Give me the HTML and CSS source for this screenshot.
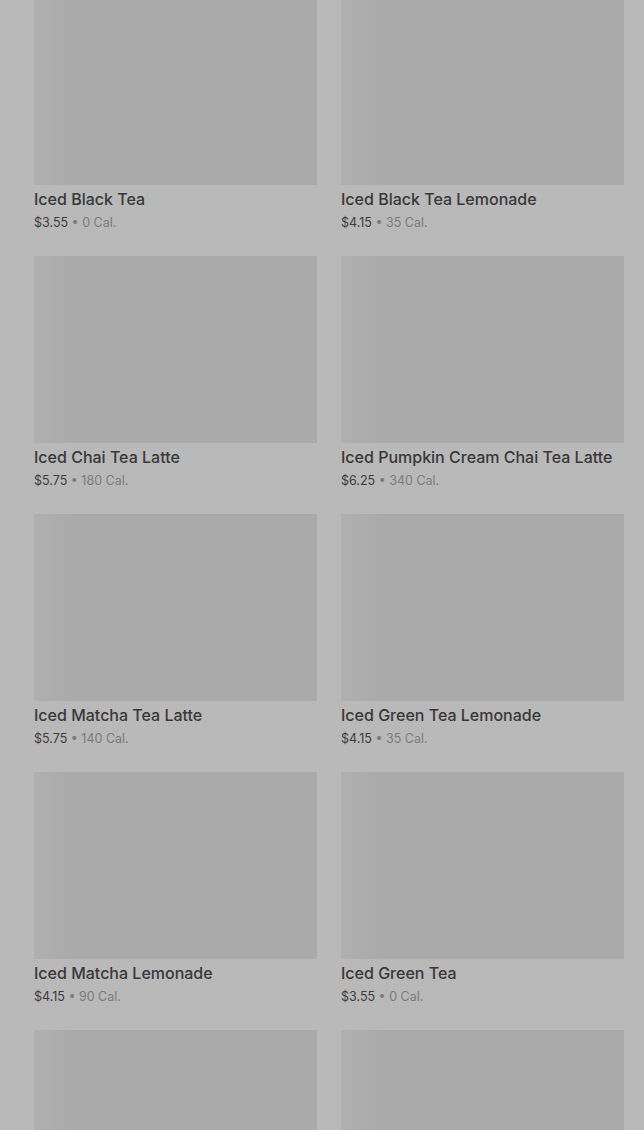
FILE: index.html
```html
<!DOCTYPE html>
<html lang="en">
<head>
  <meta charset="UTF-8" />
  <meta name="viewport" content="width=device-width, initial-scale=1.0" />
  <title>Iced Tea</title>
  <link rel="stylesheet" href="styles.css">
</head>
<body>
  <div class="menu-grid">
    <div class="product">
      <div class="product-img"></div>
      <div class="product-name">Iced Black Tea</div>
      <div class="product-info"><span class="price">$3.55</span> • 0 Cal.</div>
    </div>
    <div class="product">
      <div class="product-img"></div>
      <div class="product-name">Iced Black Tea Lemonade</div>
      <div class="product-info"><span class="price">$4.15</span> • 35 Cal.</div>
    </div>
    <div class="product">
      <div class="product-img"></div>
      <div class="product-name">Iced Chai Tea Latte</div>
      <div class="product-info"><span class="price">$5.75</span> • 180 Cal.</div>
    </div>
    <div class="product">
      <div class="product-img"></div>
      <div class="product-name">Iced Pumpkin Cream Chai Tea Latte</div>
      <div class="product-info"><span class="price">$6.25</span> • 340 Cal.</div>
    </div>
    <div class="product">
      <div class="product-img"></div>
      <div class="product-name">Iced Matcha Tea Latte</div>
      <div class="product-info"><span class="price">$5.75</span> • 140 Cal.</div>
    </div>
    <div class="product">
      <div class="product-img"></div>
      <div class="product-name">Iced Green Tea Lemonade</div>
      <div class="product-info"><span class="price">$4.15</span> • 35 Cal.</div>
    </div>
    <div class="product">
      <div class="product-img"></div>
      <div class="product-name">Iced Matcha Lemonade</div>
      <div class="product-info"><span class="price">$4.15</span> • 90 Cal.</div>
    </div>
    <div class="product">
      <div class="product-img"></div>
      <div class="product-name">Iced Green Tea</div>
      <div class="product-info"><span class="price">$3.55</span> • 0 Cal.</div>
    </div>
    <div class="product">
      <div class="product-img"></div>
    </div>
    <div class="product">
      <div class="product-img"></div>
    </div>
  </div>
</body>
</html>
```

FILE: styles.css
```css
body {
  font-family: Inter, "Noto Sans", sans-serif;
  background: #b9b9b9;
  margin: 0;
  padding: 0;
  height: 100vh;
  overflow: hidden;
}
.menu-grid {
  display: grid;
  grid-template-columns: 283px 283px;
  column-gap: 24px;
  row-gap: 24px;
  margin: -2px 20px 0 34px;
}
.product-img {
  height: 187px;
  background: linear-gradient(90deg, #b0b0b0 0, #aaaaaa 40px, #aaaaaa 100%);
}
.product-name {
  margin-top: 4px;
  font-size: 16px;
  line-height: 20px;
  font-weight: 500;
  color: #383838;
  white-space: nowrap;
}
.product-info {
  margin-top: 5px;
  font-size: 12.5px;
  line-height: 18px;
  color: #7b7b7b;
}
.price {
  color: #3c3c3c;
}
```
